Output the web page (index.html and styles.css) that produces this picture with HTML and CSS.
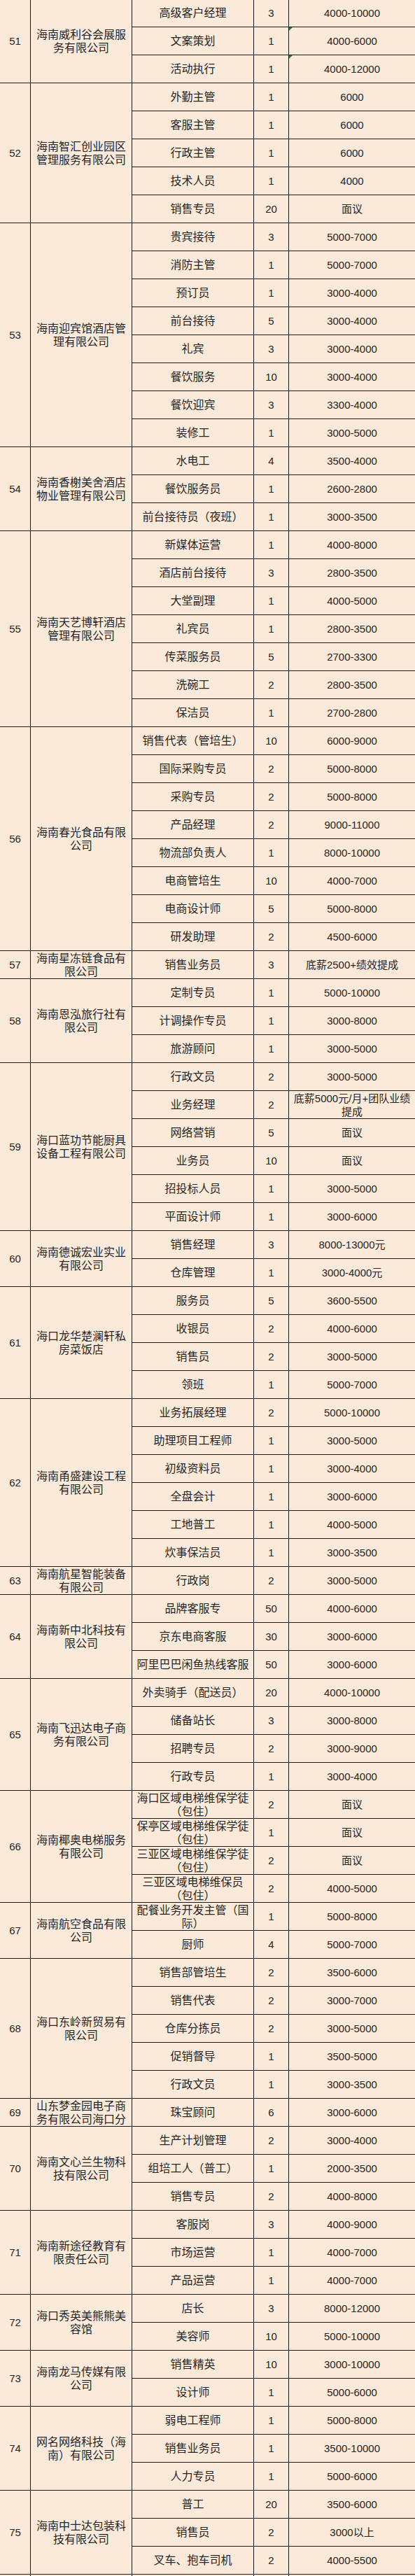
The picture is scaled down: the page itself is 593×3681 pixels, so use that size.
FILE: index.html
```html
<!DOCTYPE html>
<html lang="zh-CN">
<head>
<meta charset="utf-8">
<title>招聘岗位表</title>
<link rel="stylesheet" href="styles.css">
</head>
<body>
<div class="sheet">
  <div class="c no r3">51</div><div class="c co r3">海南威利谷会展服<br>务有限公司</div>
  <div class="c pos">高级客户经理</div><div class="c cnt">3</div><div class="c sal">4000-10000</div>
  <div class="c pos">文案策划</div><div class="c cnt">1</div><div class="c sal tri">4000-6000</div>
  <div class="c pos">活动执行</div><div class="c cnt">1</div><div class="c sal tri">4000-12000</div>

  <div class="c no r5">52</div><div class="c co r5">海南智汇创业园区<br>管理服务有限公司</div>
  <div class="c pos">外勤主管</div><div class="c cnt">1</div><div class="c sal">6000</div>
  <div class="c pos">客服主管</div><div class="c cnt">1</div><div class="c sal">6000</div>
  <div class="c pos">行政主管</div><div class="c cnt">1</div><div class="c sal">6000</div>
  <div class="c pos">技术人员</div><div class="c cnt">1</div><div class="c sal">4000</div>
  <div class="c pos">销售专员</div><div class="c cnt">20</div><div class="c sal">面议</div>

  <div class="c no r8">53</div><div class="c co r8">海南迎宾馆酒店管<br>理有限公司</div>
  <div class="c pos">贵宾接待</div><div class="c cnt">3</div><div class="c sal">5000-7000</div>
  <div class="c pos">消防主管</div><div class="c cnt">1</div><div class="c sal">5000-7000</div>
  <div class="c pos">预订员</div><div class="c cnt">1</div><div class="c sal">3000-4000</div>
  <div class="c pos">前台接待</div><div class="c cnt">5</div><div class="c sal">3000-4000</div>
  <div class="c pos">礼宾</div><div class="c cnt">3</div><div class="c sal">3000-4000</div>
  <div class="c pos">餐饮服务</div><div class="c cnt">10</div><div class="c sal">3000-4000</div>
  <div class="c pos">餐饮迎宾</div><div class="c cnt">3</div><div class="c sal">3300-4000</div>
  <div class="c pos">装修工</div><div class="c cnt">1</div><div class="c sal">3000-5000</div>

  <div class="c no r3">54</div><div class="c co r3">海南香榭美舍酒店<br>物业管理有限公司</div>
  <div class="c pos">水电工</div><div class="c cnt">4</div><div class="c sal">3500-4000</div>
  <div class="c pos">餐饮服务员</div><div class="c cnt">1</div><div class="c sal">2600-2800</div>
  <div class="c pos">前台接待员（夜班）</div><div class="c cnt">1</div><div class="c sal">3000-3500</div>

  <div class="c no r7">55</div><div class="c co r7">海南天艺博轩酒店<br>管理有限公司</div>
  <div class="c pos">新媒体运营</div><div class="c cnt">1</div><div class="c sal">4000-8000</div>
  <div class="c pos">酒店前台接待</div><div class="c cnt">3</div><div class="c sal">2800-3500</div>
  <div class="c pos">大堂副理</div><div class="c cnt">1</div><div class="c sal">4000-5000</div>
  <div class="c pos">礼宾员</div><div class="c cnt">1</div><div class="c sal">2800-3500</div>
  <div class="c pos">传菜服务员</div><div class="c cnt">5</div><div class="c sal">2700-3300</div>
  <div class="c pos">洗碗工</div><div class="c cnt">2</div><div class="c sal">2800-3500</div>
  <div class="c pos">保洁员</div><div class="c cnt">1</div><div class="c sal">2700-2800</div>

  <div class="c no r8">56</div><div class="c co r8">海南春光食品有限<br>公司</div>
  <div class="c pos">销售代表（管培生）</div><div class="c cnt">10</div><div class="c sal">6000-9000</div>
  <div class="c pos">国际采购专员</div><div class="c cnt">2</div><div class="c sal">5000-8000</div>
  <div class="c pos">采购专员</div><div class="c cnt">2</div><div class="c sal">5000-8000</div>
  <div class="c pos">产品经理</div><div class="c cnt">2</div><div class="c sal">9000-11000</div>
  <div class="c pos">物流部负责人</div><div class="c cnt">1</div><div class="c sal">8000-10000</div>
  <div class="c pos">电商管培生</div><div class="c cnt">10</div><div class="c sal">4000-7000</div>
  <div class="c pos">电商设计师</div><div class="c cnt">5</div><div class="c sal">5000-8000</div>
  <div class="c pos">研发助理</div><div class="c cnt">2</div><div class="c sal">4500-6000</div>

  <div class="c no">57</div><div class="c co">海南星冻链食品有<br>限公司</div>
  <div class="c pos">销售业务员</div><div class="c cnt">3</div><div class="c sal">底薪2500+绩效提成</div>

  <div class="c no r3">58</div><div class="c co r3">海南恩泓旅行社有<br>限公司</div>
  <div class="c pos">定制专员</div><div class="c cnt">1</div><div class="c sal">5000-10000</div>
  <div class="c pos">计调操作专员</div><div class="c cnt">1</div><div class="c sal">3000-8000</div>
  <div class="c pos">旅游顾问</div><div class="c cnt">1</div><div class="c sal">3000-5000</div>

  <div class="c no r6">59</div><div class="c co r6">海口蓝功节能厨具<br>设备工程有限公司</div>
  <div class="c pos">行政文员</div><div class="c cnt">2</div><div class="c sal">3000-5000</div>
  <div class="c pos">业务经理</div><div class="c cnt">2</div><div class="c sal">底薪5000元/月+团队业绩<br>提成</div>
  <div class="c pos">网络营销</div><div class="c cnt">5</div><div class="c sal">面议</div>
  <div class="c pos">业务员</div><div class="c cnt">10</div><div class="c sal">面议</div>
  <div class="c pos">招投标人员</div><div class="c cnt">1</div><div class="c sal">3000-5000</div>
  <div class="c pos">平面设计师</div><div class="c cnt">1</div><div class="c sal">3000-6000</div>

  <div class="c no r2">60</div><div class="c co r2">海南德诚宏业实业<br>有限公司</div>
  <div class="c pos">销售经理</div><div class="c cnt">3</div><div class="c sal">8000-13000元</div>
  <div class="c pos">仓库管理</div><div class="c cnt">1</div><div class="c sal">3000-4000元</div>

  <div class="c no r4">61</div><div class="c co r4">海口龙华楚澜轩私<br>房菜饭店</div>
  <div class="c pos">服务员</div><div class="c cnt">5</div><div class="c sal">3600-5500</div>
  <div class="c pos">收银员</div><div class="c cnt">2</div><div class="c sal">4000-6000</div>
  <div class="c pos">销售员</div><div class="c cnt">2</div><div class="c sal">3000-5000</div>
  <div class="c pos">领班</div><div class="c cnt">1</div><div class="c sal">5000-7000</div>

  <div class="c no r6">62</div><div class="c co r6">海南甬盛建设工程<br>有限公司</div>
  <div class="c pos">业务拓展经理</div><div class="c cnt">2</div><div class="c sal">5000-10000</div>
  <div class="c pos">助理项目工程师</div><div class="c cnt">1</div><div class="c sal">3000-5000</div>
  <div class="c pos">初级资料员</div><div class="c cnt">1</div><div class="c sal">3000-4000</div>
  <div class="c pos">全盘会计</div><div class="c cnt">1</div><div class="c sal">3000-6000</div>
  <div class="c pos">工地普工</div><div class="c cnt">1</div><div class="c sal">4000-5000</div>
  <div class="c pos">炊事保洁员</div><div class="c cnt">1</div><div class="c sal">3000-3500</div>

  <div class="c no">63</div><div class="c co">海南航星智能装备<br>有限公司</div>
  <div class="c pos">行政岗</div><div class="c cnt">2</div><div class="c sal">3000-5000</div>

  <div class="c no r3">64</div><div class="c co r3">海南新中北科技有<br>限公司</div>
  <div class="c pos">品牌客服专</div><div class="c cnt">50</div><div class="c sal">4000-6000</div>
  <div class="c pos">京东电商客服</div><div class="c cnt">30</div><div class="c sal">3000-6000</div>
  <div class="c pos">阿里巴巴闲鱼热线客服</div><div class="c cnt">50</div><div class="c sal">3000-6000</div>

  <div class="c no r4">65</div><div class="c co r4">海南飞迅达电子商<br>务有限公司</div>
  <div class="c pos">外卖骑手（配送员）</div><div class="c cnt">20</div><div class="c sal">4000-10000</div>
  <div class="c pos">储备站长</div><div class="c cnt">3</div><div class="c sal">3000-8000</div>
  <div class="c pos">招聘专员</div><div class="c cnt">2</div><div class="c sal">3000-9000</div>
  <div class="c pos">行政专员</div><div class="c cnt">1</div><div class="c sal">3000-4000</div>

  <div class="c no r4">66</div><div class="c co r4">海南椰奥电梯服务<br>有限公司</div>
  <div class="c pos">海口区域电梯维保学徒<br>（包住）</div><div class="c cnt">2</div><div class="c sal">面议</div>
  <div class="c pos">保亭区域电梯维保学徒<br>（包住）</div><div class="c cnt">1</div><div class="c sal">面议</div>
  <div class="c pos">三亚区域电梯维保学徒<br>（包住）</div><div class="c cnt">2</div><div class="c sal">面议</div>
  <div class="c pos">三亚区域电梯维保员<br>（包住）</div><div class="c cnt">2</div><div class="c sal">4000-5000</div>

  <div class="c no r2">67</div><div class="c co r2">海南航空食品有限<br>公司</div>
  <div class="c pos">配餐业务开发主管（国<br>际）</div><div class="c cnt">1</div><div class="c sal">5000-8000</div>
  <div class="c pos">厨师</div><div class="c cnt">4</div><div class="c sal">5000-7000</div>

  <div class="c no r5">68</div><div class="c co r5">海口东岭新贸易有<br>限公司</div>
  <div class="c pos">销售部管培生</div><div class="c cnt">2</div><div class="c sal">3500-6000</div>
  <div class="c pos">销售代表</div><div class="c cnt">2</div><div class="c sal">3000-7000</div>
  <div class="c pos">仓库分拣员</div><div class="c cnt">2</div><div class="c sal">3000-5000</div>
  <div class="c pos">促销督导</div><div class="c cnt">1</div><div class="c sal">3500-5000</div>
  <div class="c pos">行政文员</div><div class="c cnt">1</div><div class="c sal">3000-3500</div>

  <div class="c no">69</div><div class="c co">山东梦金园电子商<br>务有限公司海口分</div>
  <div class="c pos">珠宝顾问</div><div class="c cnt">6</div><div class="c sal">3000-6000</div>

  <div class="c no r3">70</div><div class="c co r3">海南文心兰生物科<br>技有限公司</div>
  <div class="c pos">生产计划管理</div><div class="c cnt">2</div><div class="c sal">3000-4000</div>
  <div class="c pos">组培工人（普工）</div><div class="c cnt">1</div><div class="c sal">2000-3500</div>
  <div class="c pos">销售专员</div><div class="c cnt">2</div><div class="c sal">4000-8000</div>

  <div class="c no r3">71</div><div class="c co r3">海南新途径教育有<br>限责任公司</div>
  <div class="c pos">客服岗</div><div class="c cnt">3</div><div class="c sal">4000-9000</div>
  <div class="c pos">市场运营</div><div class="c cnt">1</div><div class="c sal">4000-7000</div>
  <div class="c pos">产品运营</div><div class="c cnt">1</div><div class="c sal">4000-7000</div>

  <div class="c no r2">72</div><div class="c co r2">海口秀英美熊熊美<br>容馆</div>
  <div class="c pos">店长</div><div class="c cnt">3</div><div class="c sal">8000-12000</div>
  <div class="c pos">美容师</div><div class="c cnt">10</div><div class="c sal">5000-10000</div>

  <div class="c no r2">73</div><div class="c co r2">海南龙马传媒有限<br>公司</div>
  <div class="c pos">销售精英</div><div class="c cnt">10</div><div class="c sal">3000-10000</div>
  <div class="c pos">设计师</div><div class="c cnt">1</div><div class="c sal">5000-6000</div>

  <div class="c no r3">74</div><div class="c co r3">网名网络科技（海<br>南）有限公司</div>
  <div class="c pos">弱电工程师</div><div class="c cnt">1</div><div class="c sal">5000-8000</div>
  <div class="c pos">销售业务员</div><div class="c cnt">1</div><div class="c sal">3500-10000</div>
  <div class="c pos">人力专员</div><div class="c cnt">1</div><div class="c sal">5000-6000</div>

  <div class="c no r3">75</div><div class="c co r3">海南中士达包装科<br>技有限公司</div>
  <div class="c pos">普工</div><div class="c cnt">20</div><div class="c sal">3500-6000</div>
  <div class="c pos">销售员</div><div class="c cnt">2</div><div class="c sal">3000以上</div>
  <div class="c pos">叉车、抱车司机</div><div class="c cnt">2</div><div class="c sal">4000-5500</div>

  <div class="c no"></div><div class="c co"></div>
  <div class="c pos"></div><div class="c cnt"></div><div class="c sal"></div>
</div>
</body>
</html>
```

FILE: styles.css
```css
html, body {
  margin: 0;
  padding: 0;
  background: #fbe9da;
  height: 3681px;
  overflow: hidden;
}

.sheet {
  display: grid;
  grid-template-columns: 44px 145px 174px 50px 180px;
  grid-auto-rows: 40px;
  margin-top: -1px;
  font-family: "Liberation Sans", "Noto Sans CJK SC", sans-serif;
  font-size: 16px;
  font-weight: 400;
  color: #262626;
}

.c {
  box-sizing: border-box;
  position: relative;
  display: flex;
  align-items: center;
  justify-content: center;
  text-align: center;
  line-height: 19px;
  white-space: nowrap;
  overflow: hidden;
  border-right: 1px solid #1a1a1a;
  border-bottom: 1px solid #1a1a1a;
}

.no { grid-column: 1; font-size: 15px; }
.co { grid-column: 2; }
.pos { grid-column: 3; }
.cnt { grid-column: 4; font-size: 15px; }
.sal { grid-column: 5; font-size: 15px; border-right: none; }

.r2 { grid-row: span 2; }
.r3 { grid-row: span 3; }
.r4 { grid-row: span 4; }
.r5 { grid-row: span 5; }
.r6 { grid-row: span 6; }
.r7 { grid-row: span 7; }
.r8 { grid-row: span 8; }

.tri::before {
  content: "";
  position: absolute;
  left: 0;
  top: 0;
  border-top: 5px solid #2e7d32;
  border-right: 5px solid transparent;
}
```
